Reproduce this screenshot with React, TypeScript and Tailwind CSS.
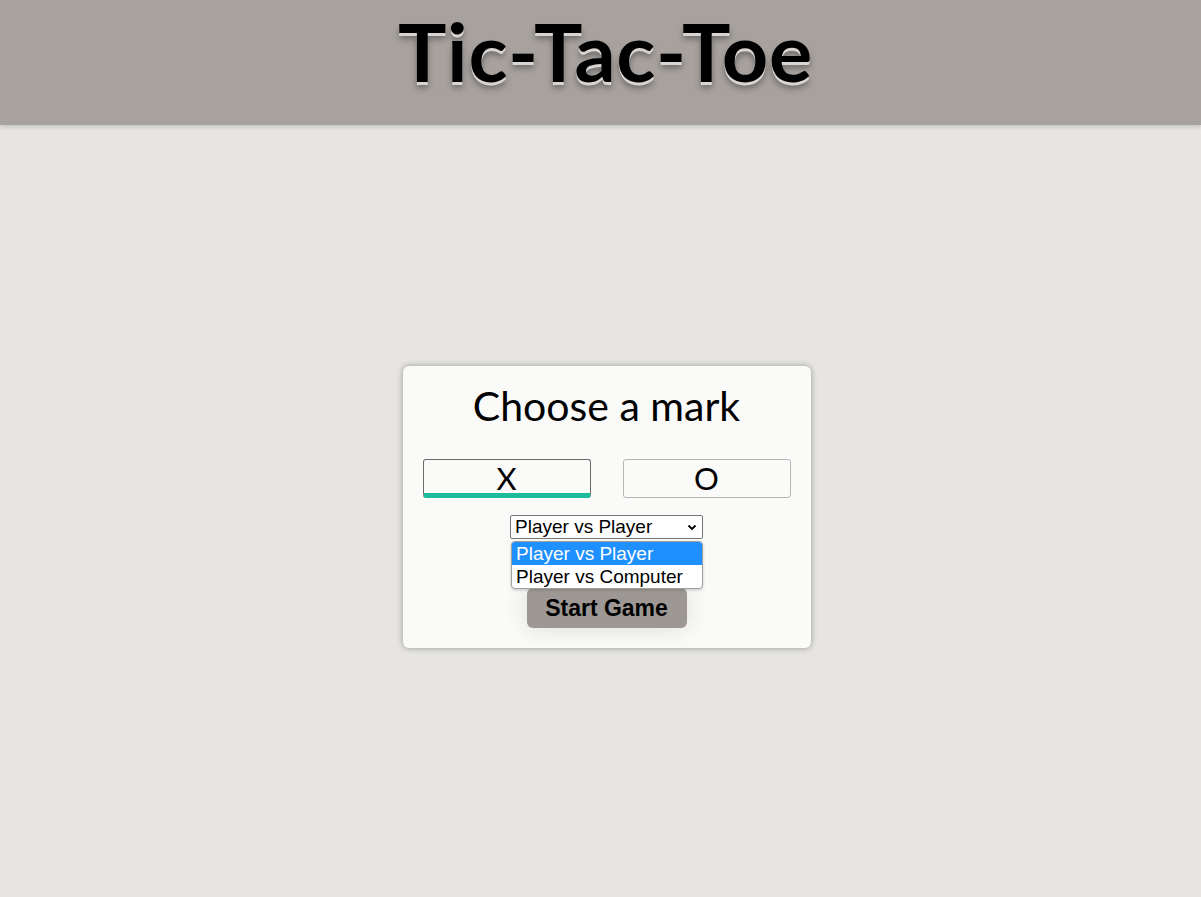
import { useState } from "react";

export default function App() {
  const [mark, setMark] = useState<"X" | "O">("X");

  return (
    <div className="min-h-screen flex flex-col bg-[#e6e5e3] font-['Lato',sans-serif]">
      <header className="h-[125px] bg-[#a7a29e] shadow-[0_2px_4px_rgba(0,0,0,0.15)] flex items-start justify-center pl-[10px]">
        <h1 className="mt-[10px] text-[81px] font-bold tracking-[0.01em] leading-none text-black [text-shadow:0_3px_0_#d8d6d4,0_6px_6px_rgba(0,0,0,0.35)]">
          Tic-Tac-Toe
        </h1>
      </header>

      <main className="flex-1 flex items-center justify-center pb-[8px] pl-[12px]">
        <div className="w-[408px] rounded-md bg-[#fafaf9] shadow-[0_0_6px_rgba(0,0,0,0.35)] flex flex-col items-center pt-[16px] pb-[20px] px-[20px]">
          <h2 className="text-[41px] leading-[48px] text-black">Choose a mark</h2>

          <div className="mt-[29px] w-full flex justify-between">
            {(["X", "O"] as const).map((m) => (
              <button
                key={m}
                onClick={() => setMark(m)}
                className={
                  m === mark
                    ? "w-[168px] h-[39px] rounded-[3px] border border-[#6b6b6b] border-b-[5px] border-b-[#1abc9c] bg-[#fafaf9] text-[31px] leading-none text-black flex items-center justify-center pt-[4px]"
                    : "w-[168px] h-[39px] rounded-[3px] border border-[#b5b5b5] bg-[#fafaf9] text-[31px] leading-none text-black flex items-center justify-center"
                }
              >
                {m}
              </button>
            ))}
          </div>

          <div className="relative mt-[17px] flex flex-col items-center">
            <div className="w-[193px] h-[24px] border border-[#767676] rounded-[2px] bg-white flex items-center justify-between pl-[4px] pr-[4px] font-['Liberation_Sans',sans-serif] text-[19px] text-black">
              <span>Player vs Player</span>
              <svg width="10" height="7" viewBox="0 0 10 7" className="mr-[1px]">
                <path d="M1.5 1.5 L5 5 L8.5 1.5" fill="none" stroke="#000" strokeWidth="1.8" />
              </svg>
            </div>

            <div className="absolute top-[26px] left-[1px] w-[192px] z-10 bg-white rounded-[4px] border border-[#a0a0a0] shadow-[0_1px_3px_rgba(0,0,0,0.2)] overflow-hidden font-['Liberation_Sans',sans-serif] text-[19px]">
              <div className="h-[23px] leading-[23px] pl-[4px] bg-[#1e90ff] text-white">Player vs Player</div>
              <div className="h-[23px] leading-[23px] pl-[4px] text-black">Player vs Computer</div>
            </div>

            <button className="mt-[49px] w-[160px] h-[40px] rounded-[6px] bg-[#9d9894] shadow-[0_0_24px_rgba(0,0,0,0.12)] font-['Liberation_Sans',sans-serif] font-bold text-[23px] text-black">
              Start Game
            </button>
          </div>
        </div>
      </main>
    </div>
  );
}
